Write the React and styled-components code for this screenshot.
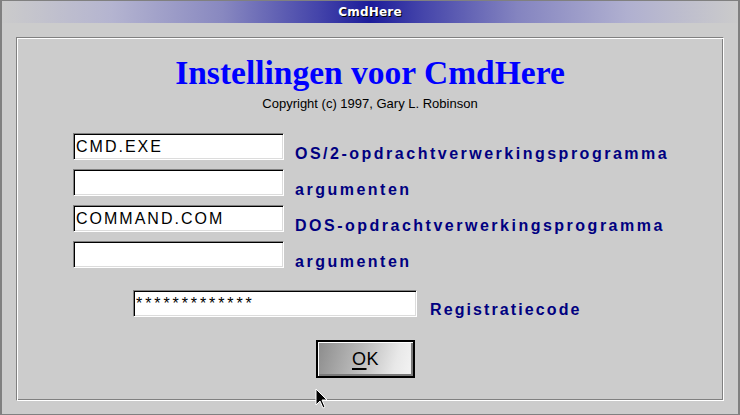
import React from 'react';
import styled, { createGlobalStyle } from 'styled-components';

const GlobalStyle = createGlobalStyle`
  html, body {
    margin: 0;
    padding: 0;
    background: #cccccc;
  }
  * {
    box-sizing: border-box;
  }
`;

const Window = styled.div`
  position: relative;
  width: 740px;
  height: 415px;
  background: #cccccc;
  border-style: solid;
  border-color: #808080;
  border-width: 1px 2px 1px 2px;
  display: flex;
  flex-direction: column;
  overflow: hidden;
`;

const TitleBar = styled.div`
  height: 22px;
  flex: none;
  display: flex;
  align-items: center;
  justify-content: center;
  background: linear-gradient(
    to right,
    #cbcbcb 0%,
    #b4b4d0 15%,
    #8888c0 30%,
    #4444aa 43%,
    #1c1c9a 50%,
    #4444aa 57%,
    #8484c0 70%,
    #b0b0d0 85%,
    #cbcbcb 100%
  );
`;

const TitleText = styled.span`
  font-family: "DejaVu Sans", "Liberation Sans", sans-serif;
  font-weight: bold;
  font-size: 12px;
  color: #ffffff;
  text-shadow: 1px 1px 0 #000000;
  letter-spacing: 0.2px;
`;

const Body = styled.div`
  flex: 1;
  padding: 14px 14px 13px 14px;
  display: flex;
`;

const Frame = styled.div`
  flex: 1;
  border-style: solid;
  border-width: 1px;
  border-color: #808080 #ffffff #ffffff #808080;
  box-shadow: inset 1px 1px 0 #ffffff, inset -1px -1px 0 #808080;
  padding-top: 15px;
  display: flex;
  flex-direction: column;
`;

const Heading = styled.h1`
  margin: 0;
  text-align: center;
  font-family: "Liberation Serif", "Times New Roman", serif;
  font-weight: bold;
  font-size: 33.5px;
  line-height: 40px;
  color: #0000ff;
`;

const Copyright = styled.div`
  margin-top: 4px;
  text-align: center;
  font-family: "Liberation Sans", Arial, sans-serif;
  font-size: 13px;
  line-height: 14px;
  color: #000000;
`;

const FieldGrid = styled.div`
  margin-top: 22px;
  margin-left: 56px;
  display: grid;
  grid-template-columns: 211px auto;
  grid-auto-rows: 27px;
  column-gap: 11px;
  row-gap: 9px;
`;

const TextField = styled.input`
  width: ${p => p.$width || 211}px;
  height: 27px;
  margin: 0;
  padding: 0 2px;
  border-style: solid;
  border-width: 1px;
  border-color: #808080 #ffffff #ffffff #808080;
  box-shadow: inset 1px 1px 0 #000000, inset -1px -1px 0 #dcdcdc;
  background: #ffffff;
  font-family: "Liberation Sans", Arial, sans-serif;
  font-size: 16px;
  letter-spacing: ${p => p.$spacing || 2}px;
  color: #000000;
  outline: none;
`;

const Label = styled.span`
  padding-top: ${p => p.$top || 12}px;
  font-family: "Liberation Sans", Arial, sans-serif;
  font-weight: bold;
  font-size: 16px;
  line-height: 18px;
  letter-spacing: ${p => p.$spacing || 2.5}px;
  color: #000080;
  white-space: nowrap;
`;

const RegRow = styled.div`
  margin-top: 22px;
  margin-left: 116px;
  display: flex;
  align-items: flex-start;
  gap: 13px;
  height: 27px;
`;

const ButtonRow = styled.div`
  margin-top: 23px;
  margin-left: 299px;
`;

const OkButton = styled.button`
  width: 99px;
  height: 38px;
  padding: 0;
  border: 2px solid #000000;
  box-shadow: inset 1px 1px 0 #ffffff, inset -2px -2px 0 #7a7a7a;
  background: linear-gradient(105deg, #8c8c8c 0%, #bcbcbc 45%, #e8e8e8 80%, #f4f4f4 100%);
  font-family: "Liberation Sans", Arial, sans-serif;
  font-size: 18px;
  letter-spacing: 0.5px;
  color: #000000;
  cursor: default;

  u {
    text-decoration-thickness: 2px;
    text-underline-offset: 3px;
  }
`;

const Cursor = styled.svg`
  position: absolute;
  left: 313px;
  top: 387px;
  pointer-events: none;
`;

export default function App() {
  return (
    <>
      <GlobalStyle />
      <Window>
        <TitleBar>
          <TitleText>CmdHere</TitleText>
        </TitleBar>
        <Body>
          <Frame>
            <Heading>Instellingen voor CmdHere</Heading>
            <Copyright>Copyright (c) 1997, Gary L. Robinson</Copyright>

            <FieldGrid>
              <TextField readOnly defaultValue="CMD.EXE" />
              <Label>OS/2-opdrachtverwerkingsprogramma</Label>
              <TextField readOnly defaultValue="" />
              <Label>argumenten</Label>
              <TextField readOnly defaultValue="COMMAND.COM" />
              <Label>DOS-opdrachtverwerkingsprogramma</Label>
              <TextField readOnly defaultValue="" />
              <Label>argumenten</Label>
            </FieldGrid>

            <RegRow>
              <TextField $width={284} $spacing={2.9} readOnly defaultValue="*************" />
              <Label $top={11} $spacing={2.1}>Registratiecode</Label>
            </RegRow>

            <ButtonRow>
              <OkButton type="button"><u>O</u>K</OkButton>
            </ButtonRow>
          </Frame>
        </Body>
        <Cursor width="14" height="22" viewBox="0 0 14 22">
          <path d="M1 1 L1 17 L5 13 L8 20 L10 19 L7 12 L12 12 Z" fill="#000000" stroke="#ffffff" strokeWidth="1" />
        </Cursor>
      </Window>
    </>
  );
}
